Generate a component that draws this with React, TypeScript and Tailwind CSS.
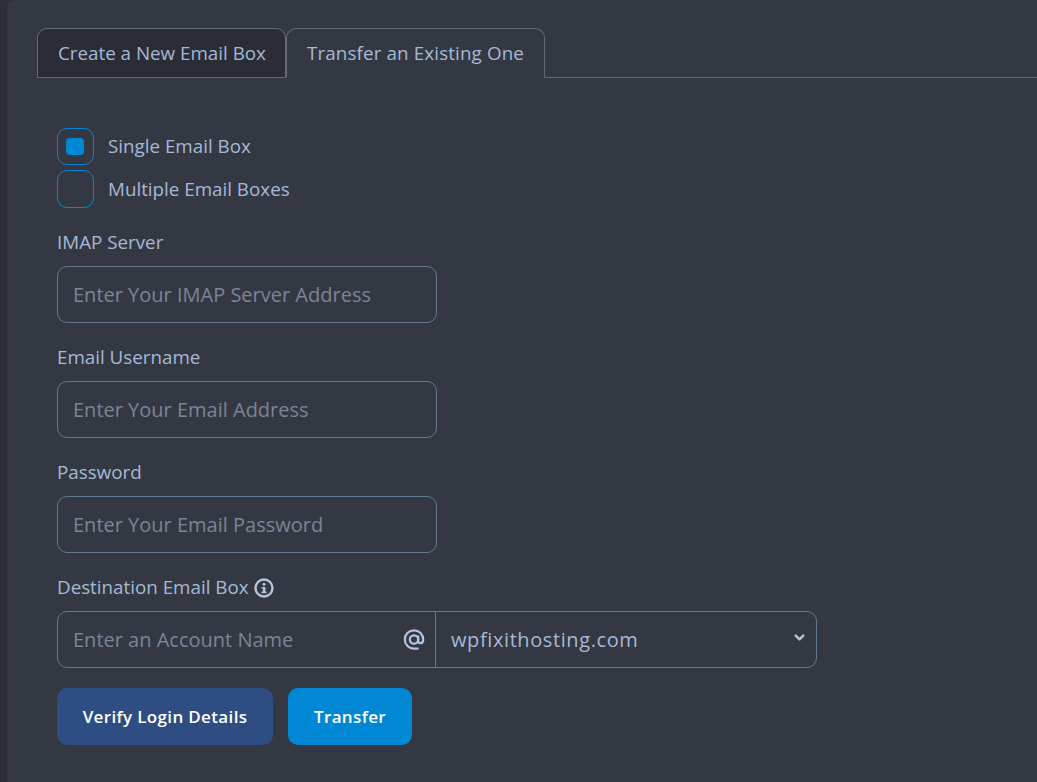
import { ChevronDown } from 'lucide-react';

function RadioRow({ label, checked, tall }: { label: string; checked?: boolean; tall?: boolean }) {
  return (
    <div className={`flex items-center gap-[14px] ${tall ? 'h-[38px]' : 'h-[37px]'}`}>
      <span className={`w-[37px] ${tall ? 'h-[38px]' : 'h-[37px]'} flex items-center justify-center rounded-[10px] border border-[#0088d4]`}>
        {checked && <span className="w-[18px] h-[17px] mr-[1px] rounded-[4px] bg-[#0088d4]" />}
      </span>
      <span className={`text-[18.8px] leading-[25px] text-[#a6b8d6] ${tall ? '' : '-mt-[1px]'}`}>{label}</span>
    </div>
  );
}

function Field({ label, placeholder }: { label: string; placeholder: string }) {
  return (
    <div className="flex flex-col">
      <label className="text-[18.8px] leading-[25px] text-[#a6b8d6] mb-[11px]">{label}</label>
      <div className="w-[380px] h-[57px] rounded-[10px] border border-[#5f7a8c] flex items-center px-[15px] text-[20px] text-[#7a8597]">
        {placeholder}
      </div>
    </div>
  );
}

function InfoIcon() {
  return (
    <svg width="20" height="20" viewBox="0 0 20 20" fill="none" className="text-[#b4c5e0]">
      <circle cx="10" cy="10" r="8.5" stroke="currentColor" strokeWidth="2.4" />
      <rect x="8.8" y="9" width="2.6" height="6" fill="currentColor" />
      <rect x="7.6" y="9" width="2" height="1.6" fill="currentColor" />
      <rect x="7.6" y="13.6" width="5" height="1.6" fill="currentColor" />
      <circle cx="10" cy="6.2" r="1.5" fill="currentColor" />
    </svg>
  );
}

function AtIcon() {
  return (
    <svg width="22" height="22" viewBox="0 0 22 22" fill="none" stroke="currentColor" strokeWidth="2.2" className="text-[#b4c5e0]">
      <circle cx="11" cy="10.5" r="4.2" />
      <path d="M15.2 6.5v5.2c0 1.5 1 2.5 2.4 2.5 1.6 0 2.6-1.5 2.6-3.7C20.2 5.3 16.2 1.4 11 1.4 5.8 1.4 1.8 5.4 1.8 10.5S5.8 19.6 11 19.6h4.6" />
    </svg>
  );
}

export default function App() {
  return (
    <div className="w-[1037px] h-[782px] flex bg-[#2c2f38] overflow-hidden font-['Open_Sans',sans-serif]">
      <div className="w-[7px] h-full" />
      <div className="flex-1 pt-[28px] pl-[30px] bg-[#343843] rounded-tl-[8px]">
        {/* Tabs */}
        <div className="flex h-[50px] border-b border-[#646a78] text-[18.8px] text-[#a6b8d6]">
          <div className="h-[50px] w-[249px] pl-[20px] flex items-center rounded-t-[10px] border border-[#646a78] bg-[#2a2d36]">
            Create a New Email Box
          </div>
          <div className="h-[50px] w-[259px] pl-[20px] flex items-center rounded-t-[10px] border border-[#646a78] border-b-[#343843] bg-[#343843] tracking-[0.13px]">
            Transfer an Existing One
          </div>
        </div>

        <div className="pl-[20px]">
          <div className="mt-[50px] flex flex-col gap-[5px]">
            <RadioRow label="Single Email Box" checked />
            <RadioRow label="Multiple Email Boxes" tall />
          </div>

          <div className="mt-[22px] flex flex-col gap-[22px]">
            <Field label="IMAP Server" placeholder="Enter Your IMAP Server Address" />
            <Field label="Email Username" placeholder="Enter Your Email Address" />
            <Field label="Password" placeholder="Enter Your Email Password" />
          </div>

          <div className="mt-[22px]">
            <div className="flex items-center gap-[5px] mb-[11px] h-[25px]">
              <span className="text-[18.8px] text-[#a6b8d6]">Destination Email Box</span>
              <InfoIcon />
            </div>
            <div className="w-[760px] h-[57px] rounded-[10px] border border-[#5f7a8c] flex items-center">
              <div className="w-[377px] flex items-center justify-between pl-[15px] pr-[10px] text-[20px] text-[#7a8597]">
                <span>Enter an Account Name</span>
                <AtIcon />
              </div>
              <div className="flex-1 h-full border-l border-[#5f7a8c] flex items-center justify-between pl-[15px] pr-[9px]">
                <span className="text-[20px] text-[#a6b8d6] tracking-[0.6px]">wpfixithosting.com</span>
                <ChevronDown size={15} strokeWidth={4} className="text-[#b4c5e0] -mt-[4px]" />
              </div>
            </div>
          </div>

          <div className="mt-[20px] flex gap-[15px]">
            <button className="w-[216px] h-[57px] rounded-[10px] bg-[#2e4d82] text-white text-[17px] font-semibold tracking-[0.35px]">
              Verify Login Details
            </button>
            <button className="w-[124px] h-[57px] rounded-[10px] bg-[#0088d4] text-white text-[17px] font-semibold tracking-[0.35px]">
              Transfer
            </button>
          </div>
        </div>
      </div>
    </div>
  );
}
